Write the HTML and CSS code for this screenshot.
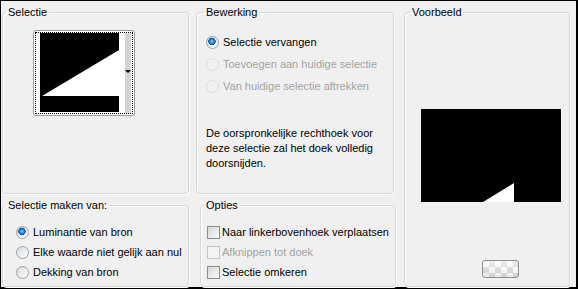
FILE: index.html
```html
<!DOCTYPE html>
<html lang="nl">
<head>
    <meta charset="UTF-8">
    <title>Selectie van masker</title>
    <link rel="stylesheet" href="styles.css">
</head>
<body>
    <div class="dialog">
        <div class="layout">
            <fieldset class="group g-sel">
                <legend>Selectie</legend>
                <div class="thumb">
                    <div class="thumb-focus">
                        <svg class="thumb-img" width="79" height="79" viewBox="0 0 79 79">
                            <rect width="79" height="79" fill="#000"/>
                            <polygon points="2,63 79,17 79,63" fill="#fff"/>
                        </svg>
                        <span class="thumb-gap"></span>
                        <span class="thumb-drop"><i class="arrow"></i></span>
                    </div>
                </div>
            </fieldset>

            <fieldset class="group g-edit">
                <legend>Bewerking</legend>
                <div class="options wide">
                    <label class="row"><input type="radio" name="op" checked> Selectie vervangen</label>
                    <label class="row off"><input type="radio" name="op" disabled> Toevoegen aan huidige selectie</label>
                    <label class="row off"><input type="radio" name="op" disabled> Van huidige selectie aftrekken</label>
                </div>
                <p class="note">De oorspronkelijke rechthoek voor deze selectie zal het doek volledig doorsnijden.</p>
            </fieldset>

            <fieldset class="group g-preview">
                <legend>Voorbeeld</legend>
                <svg class="preview" width="140" height="93" viewBox="0 0 140 93">
                    <rect width="140" height="93" fill="#000"/>
                    <polygon points="62,93 93,74 93,93" fill="#fff"/>
                </svg>
                <button class="bg-btn" type="button" title="Achtergrond"></button>
            </fieldset>

            <fieldset class="group g-source">
                <legend>Selectie maken van:</legend>
                <div class="options">
                    <label class="row"><input type="radio" name="src" checked> Luminantie van bron</label>
                    <label class="row"><input type="radio" name="src"> Elke waarde niet gelijk aan nul</label>
                    <label class="row"><input type="radio" name="src"> Dekking van bron</label>
                </div>
            </fieldset>

            <fieldset class="group g-opts">
                <legend>Opties</legend>
                <div class="options">
                    <label class="row check"><input type="checkbox"> Naar linkerbovenhoek verplaatsen</label>
                    <label class="row check off"><input type="checkbox" disabled> Afknippen tot doek</label>
                    <label class="row check"><input type="checkbox"> Selectie omkeren</label>
                </div>
            </fieldset>
        </div>
    </div>
</body>
</html>
```

FILE: styles.css
```css
* {
    margin: 0;
    padding: 0;
    box-sizing: border-box;
}

body {
    font-family: 'Liberation Sans', Arial, sans-serif;
    font-size: 11px;
    line-height: 13px;
    color: #000;
    background: #000;
}

.dialog {
    width: 578px;
    height: 289px;
    border-style: solid;
    border-color: #000;
    border-width: 1px 2px 2px 1px;
    background: #f0f0f0;
    padding: 5px 0 0 1px;
}

.layout {
    display: grid;
    grid-template-columns: 187px 201px 166px;
    grid-template-rows: 188px 88px;
    column-gap: 7px;
    row-gap: 5px;
}

.group {
    border: 1px solid #d3dadf;
    border-radius: 4px;
    min-width: 0;
    padding: 0;
    box-shadow: 1px 1px 0 #fff, inset 1px 1px 0 #fff;
}

.group legend {
    margin-left: 3px;
    padding: 0 2px;
}

.g-sel { grid-column: 1; grid-row: 1; }
.g-edit { grid-column: 2; grid-row: 1; margin-right: 3px; }
.g-edit legend { margin-left: 7px; }
.g-preview { grid-column: 3; grid-row: 1 / 3; }
.g-preview legend { margin-left: 5px; }
.g-source { grid-column: 1; grid-row: 2; }
.g-opts { grid-column: 2; grid-row: 2; margin-left: 4px; margin-right: 1px; }

/* selectie thumbnail */
.thumb {
    width: 102px;
    height: 86px;
    margin: 11px 0 0 30px;
    border: 1px solid #9c9c9c;
    border-radius: 3px;
    background: #fff;
    padding: 1px;
}

.thumb-focus {
    height: 100%;
    border: 1px dotted #000;
    display: flex;
    padding-left: 4px;
    background: #fff;
}

.thumb-img {
    display: block;
    flex: none;
}

.thumb-gap {
    width: 6px;
    flex: none;
}

.thumb-drop {
    width: 6px;
    flex: none;
    background: #d4d4d4;
    display: flex;
    align-items: center;
    justify-content: center;
    padding-bottom: 4px;
}

.arrow {
    width: 0;
    height: 0;
    border-left: 3px solid transparent;
    border-right: 3px solid transparent;
    border-top: 3px solid #000;
}

/* radio / checkbox lijsten */
.options {
    padding: 10px 0 0 13px;
}

.options.wide {
    padding: 12px 0 0 9px;
}

.row {
    display: flex;
    align-items: center;
    gap: 4px;
    height: 20px;
    white-space: nowrap;
}

.wide .row {
    height: 22px;
}

.row.off {
    color: #a3a3a3;
}

.row input {
    appearance: none;
    width: 13px;
    height: 13px;
    flex: none;
    margin: 0;
}

input[type="radio"] {
    border-radius: 50%;
    border: 1px solid #9aa4ac;
    background: linear-gradient(135deg, #d8dbdf, #fdfdfd);
}

input[type="radio"]:checked {
    background: radial-gradient(circle at 45% 40%, #8fd0ff 0, #2a84d6 2px, #15559e 3.5px, transparent 4px),
                linear-gradient(135deg, #d8dbdf, #fdfdfd);
}

input[type="radio"]:disabled {
    border-color: #dcdcdc;
    background: #f1f1f1;
}

.g-opts .options {
    padding-left: 6px;
}

.check {
    gap: 2px;
}

input[type="checkbox"] {
    border: 1px solid #8c8c8c;
    background: linear-gradient(135deg, #d9d9d9, #f8f8f8);
}

input[type="checkbox"]:disabled {
    border-color: #c6c6c6;
    background: #f3f3f3;
}

.note {
    margin: 29px 0 0 9px;
    width: 180px;
    line-height: 15px;
}

/* voorbeeld */
.preview {
    display: block;
    margin: 90px 0 0 16px;
}

.bg-btn {
    display: block;
    width: 37px;
    height: 18px;
    margin: 58px 0 0 77px;
    border: 1px solid #8e8e8e;
    border-radius: 3px;
    background:
        linear-gradient(rgba(255,255,255,0.55), rgba(255,255,255,0) 50%, rgba(0,0,0,0.06)),
        conic-gradient(#dcdcdc 25%, #f7f7f7 0 50%, #dcdcdc 0 75%, #f7f7f7 0) 0 0 / 12px 12px;
}
```
